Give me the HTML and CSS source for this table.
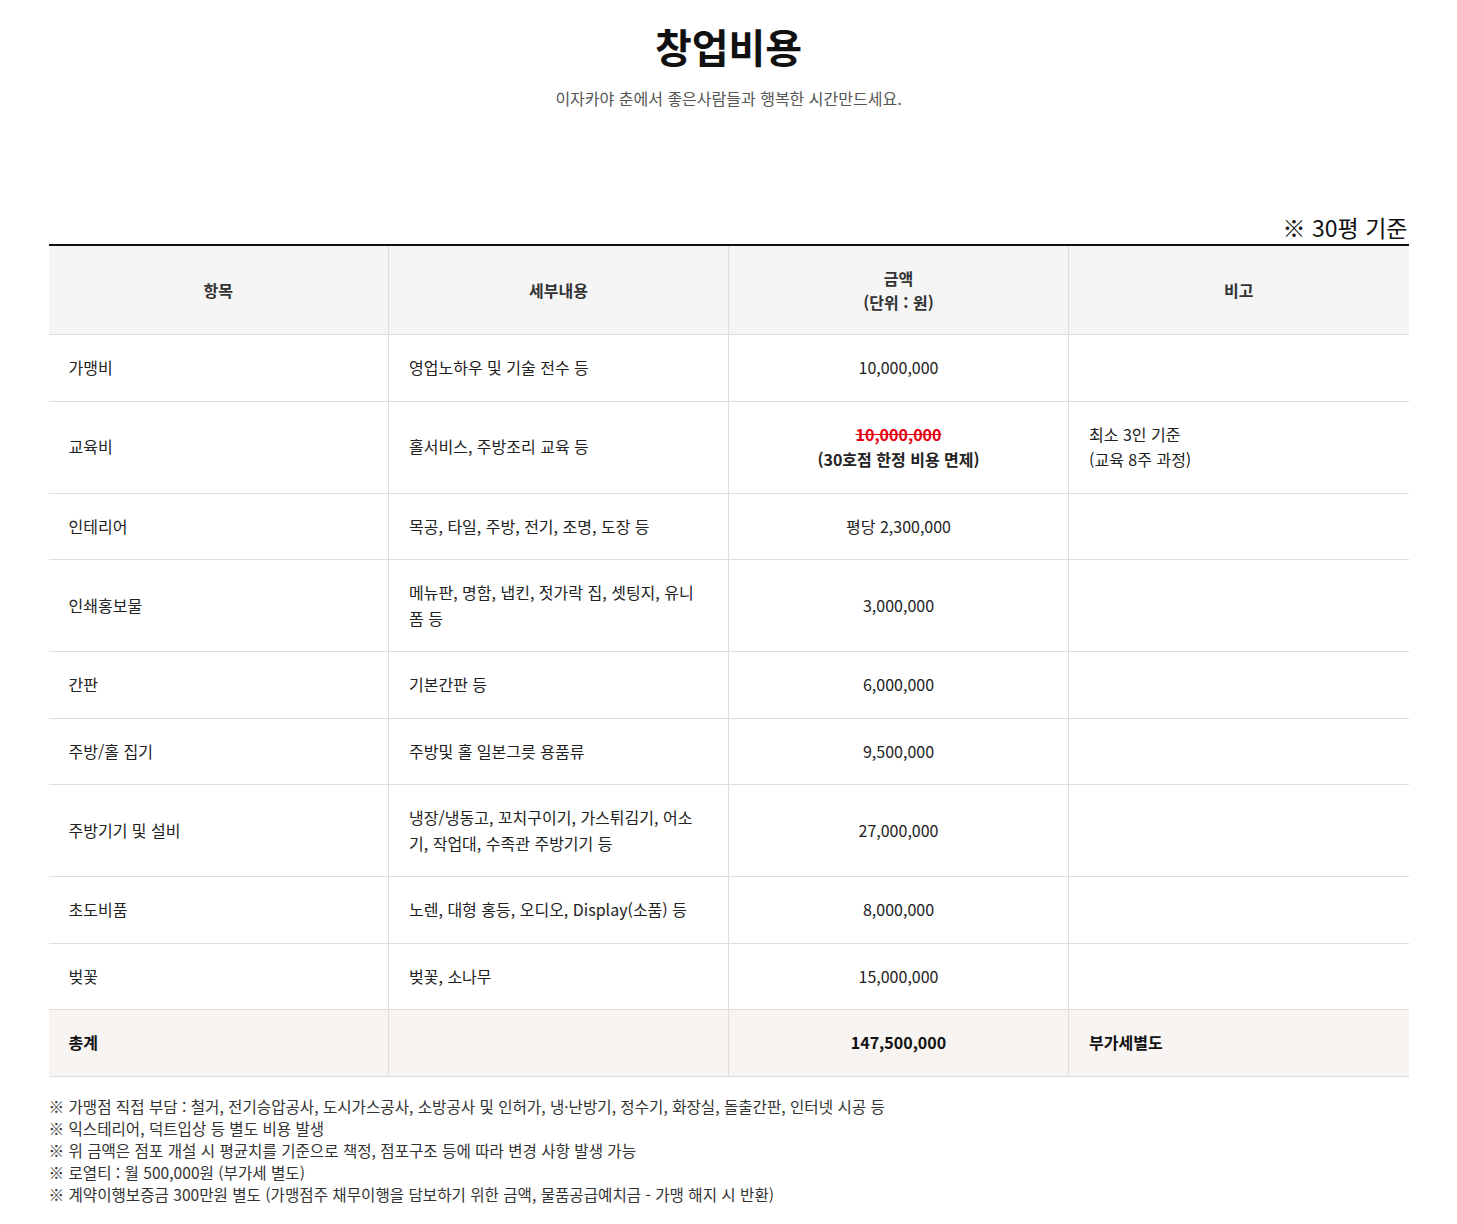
FILE: index.html
```html
<!DOCTYPE html>
<html lang="ko">
<head>
<meta charset="utf-8">
<title>창업비용</title>
<link rel="stylesheet" href="styles.css">
</head>
<body>
<div class="wrap">
  <header class="head">
    <h1 class="title">창업비용</h1>
    <p class="subtitle">이자카야 춘에서 좋은사람들과 행복한 시간만드세요.</p>
  </header>
  <p class="basis">※ 30평 기준</p>
  <table class="cost">
    <colgroup><col class="c"><col class="c"><col class="c"><col class="c"></colgroup>
    <thead>
      <tr><th>항목</th><th>세부내용</th><th>금액<br>(단위 : 원)</th><th>비고</th></tr>
    </thead>
    <tbody>
      <tr><td>가맹비</td><td>영업노하우 및 기술 전수 등</td><td class="amt">10,000,000</td><td></td></tr>
      <tr><td>교육비</td><td>홀서비스, 주방조리 교육 등</td><td class="amt"><span class="strike">10,000,000</span><br><strong>(30호점 한정 비용 면제)</strong></td><td>최소 3인 기준<br>(교육 8주 과정)</td></tr>
      <tr><td>인테리어</td><td>목공, 타일, 주방, 전기, 조명, 도장 등</td><td class="amt">평당 2,300,000</td><td></td></tr>
      <tr><td>인쇄홍보물</td><td>메뉴판, 명함, 냅킨, 젓가락 집, 셋팅지, 유니폼 등</td><td class="amt">3,000,000</td><td></td></tr>
      <tr><td>간판</td><td>기본간판 등</td><td class="amt">6,000,000</td><td></td></tr>
      <tr><td>주방/홀 집기</td><td>주방및 홀 일본그릇 용품류</td><td class="amt">9,500,000</td><td></td></tr>
      <tr><td>주방기기 및 설비</td><td>냉장/냉동고, 꼬치구이기, 가스튀김기, 어소기, 작업대, 수족관 주방기기 등</td><td class="amt">27,000,000</td><td></td></tr>
      <tr><td>초도비품</td><td>노렌, 대형 홍등, 오디오, Display(소품) 등</td><td class="amt">8,000,000</td><td></td></tr>
      <tr><td>벚꽃</td><td>벚꽃, 소나무</td><td class="amt">15,000,000</td><td></td></tr>
      <tr class="total"><td>총계</td><td></td><td class="amt">147,500,000</td><td>부가세별도</td></tr>
    </tbody>
  </table>
  <ul class="notes">
    <li>※ 가맹점 직접 부담 : 철거, 전기승압공사, 도시가스공사, 소방공사 및 인허가, 냉·난방기, 정수기, 화장실, 돌출간판, 인터넷 시공 등</li>
    <li>※ 익스테리어, 덕트입상 등 별도 비용 발생</li>
    <li>※ 위 금액은 점포 개설 시 평균치를 기준으로 책정, 점포구조 등에 따라 변경 사항 발생 가능</li>
    <li>※ 로열티 : 월 500,000원 (부가세 별도)</li>
    <li>※ 계약이행보증금 300만원 별도 (가맹점주 채무이행을 담보하기 위한 금액, 물품공급예치금 - 가맹 해지 시 반환)</li>
  </ul>
</div>
</body>
</html>
```
FILE: styles.css
```css
html, body {
  margin: 0;
  padding: 0;
  background: #fff;
}
body {
  font-family: "Noto Sans CJK KR", "Noto Sans", sans-serif;
  color: #222;
}
.wrap {
  width: 1360px;
  margin: 0 auto;
}
.head {
  text-align: center;
  padding-top: 19px;
}
.title {
  margin: 0;
  font-size: 40px;
  line-height: 54px;
  font-weight: 700;
  color: #111;
}
.subtitle {
  margin: 14px 0 0;
  font-size: 16px;
  line-height: 22px;
  color: #555;
}
.basis {
  margin: 103px 0 0;
  text-align: right;
  font-size: 23px;
  line-height: 30px;
  color: #111;
  padding-right: 1px;
}
.cost {
  width: 100%;
  border-collapse: collapse;
  table-layout: fixed;
  border-top: 2px solid #111;
  margin-top: 2px;
  font-size: 16px;
}
.cost col.c { width: 25%; }
.cost th {
  background: #f5f5f5;
  font-weight: 700;
  color: #333;
  line-height: 24px;
  padding: 20px 20px;
  text-align: center;
  border-bottom: 1px solid #ddd;
  border-left: 1px solid #ddd;
}
.cost td {
  line-height: 25.5px;
  padding: 20px 20px;
  text-align: left;
  color: #222;
  border-bottom: 1px solid #ddd;
  border-left: 1px solid #ddd;
  vertical-align: middle;
}
.cost th:first-child, .cost td:first-child { border-left: none; }
.cost td.amt { text-align: center; }
.strike {
  color: #e60012;
  font-weight: 700;
  text-decoration: line-through;
}
.cost strong { font-weight: 700; color: #222; }
.total td {
  background: #f7f4f1;
  font-weight: 700;
  color: #111;
}
.notes {
  list-style: none;
  margin: 18px 0 20px;
  padding: 0;
  font-size: 15.6px;
  line-height: 22px;
  color: #333;
}
```
